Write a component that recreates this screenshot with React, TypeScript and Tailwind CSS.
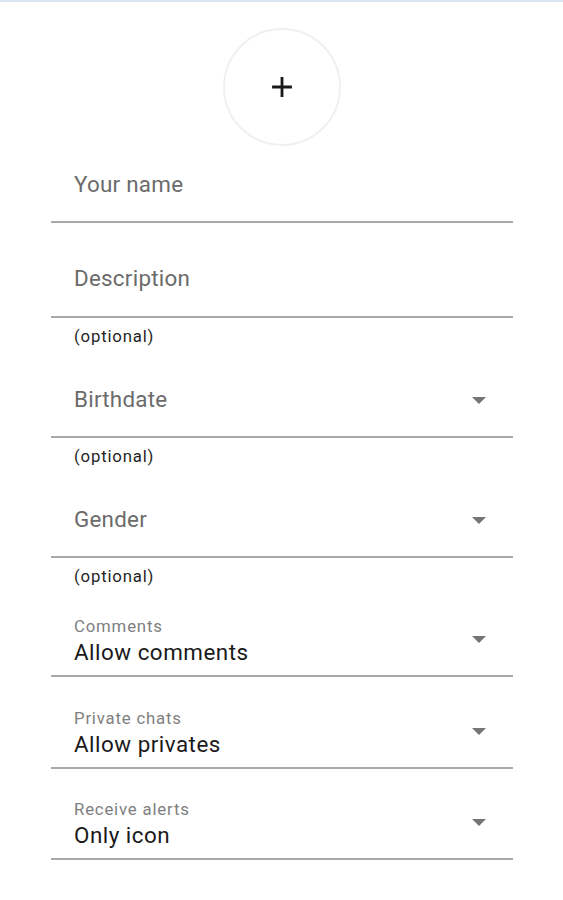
const ROBOTO = { fontFamily: "Roboto, 'Noto Sans', sans-serif" };

function Caret() {
  return (
    <svg width="14" height="7" viewBox="0 0 14 7" className="mr-[27px] mb-[32px] shrink-0">
      <polygon points="0,0 14,0 7,7" fill="#757575" />
    </svg>
  );
}

function TextField({ label, height, pb }: { label: string; height: string; pb: string }) {
  return (
    <div className={`flex items-end border-b-2 border-[#a8a8a8] ${height}`}>
      <div className={`pl-[23px] text-[22.4px] leading-[26px] tracking-[0.25px] text-[#6b6b6b] ${pb}`}>{label}</div>
    </div>
  );
}

function SelectPlaceholder({ label }: { label: string }) {
  return (
    <div className="flex h-[95px] items-end justify-between border-b-2 border-[#a8a8a8]">
      <div className="pb-[24px] pl-[23px] text-[22.4px] leading-[26px] tracking-[0.25px] text-[#6b6b6b]">{label}</div>
      <Caret />
    </div>
  );
}

function SelectValue({ label, value, height }: { label: string; value: string; height: string }) {
  return (
    <div className={`flex items-end justify-between border-b-2 border-[#a8a8a8] ${height}`}>
      <div className="pb-[10px] pl-[23px]">
        <div className="mb-[3px] text-[16.8px] leading-[20px] tracking-[0.8px] text-[#808080]">{label}</div>
        <div className="text-[22.4px] leading-[26px] tracking-[0.5px] text-[#1a1a1a]">{value}</div>
      </div>
      <Caret />
    </div>
  );
}

function Helper() {
  return (
    <div className="h-[25px] pl-[23px] pt-[12px] text-[16.8px] leading-[13px] tracking-[0.8px] text-[#1f1f1f]">
      (optional)
    </div>
  );
}

export default function App() {
  return (
    <div className="min-h-[900px] w-[563px] bg-white" style={ROBOTO}>
      <div className="h-[2px] bg-[#dbe6f2]" />
      <div className="mx-auto mt-[26px] flex h-[118px] w-[118px] items-center justify-center rounded-full border-2 border-[#f0f0f0]">
        <svg width="34" height="34" viewBox="0 0 24 24">
          <path d="M19 13h-6v6h-2v-6H5v-2h6V5h2v6h6v2z" fill="#1a1a1a" />
        </svg>
      </div>
      <div className="pl-[51px] pr-[50px]">
        <TextField label="Your name" height="h-[77px]" pb="pb-[24px]" />
        <TextField label="Description" height="h-[95px]" pb="pb-[25px]" />
        <Helper />
        <SelectPlaceholder label="Birthdate" />
        <Helper />
        <SelectPlaceholder label="Gender" />
        <Helper />
        <SelectValue label="Comments" value="Allow comments" height="h-[94px]" />
        <SelectValue label="Private chats" value="Allow privates" height="h-[92px]" />
        <SelectValue label="Receive alerts" value="Only icon" height="h-[91px]" />
      </div>
    </div>
  );
}
